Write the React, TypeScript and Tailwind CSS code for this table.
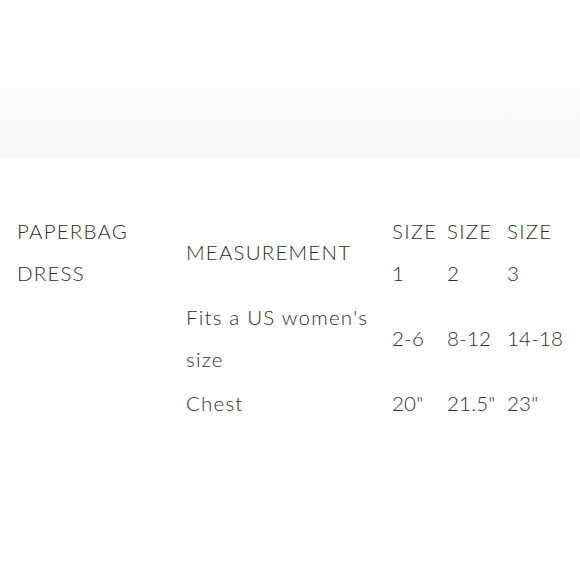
const rows = [
  { label: ['Fits a US women\'s', 'size'], values: ['2-6', '8-12', '14-18'] },
  { label: ['Chest'], values: ['20"', '21.5"', '23"'] },
];

export default function App() {
  return (
    <div className="flex h-[580px] w-[580px] flex-col overflow-hidden bg-white font-['Lato','Liberation_Sans',sans-serif] font-light text-[#2e2e2e]">
      <div className="h-[157px] shrink-0 bg-gradient-to-b from-white via-[#fdfdfd] to-[#f8f8f8]" />
      <div className="shrink-0 px-[17px] pt-[52px]">
        <table className="w-[546px] table-fixed border-collapse whitespace-nowrap text-[20.5px] leading-[42px] tracking-[1.2px]">
          <tbody>
            <tr>
              <td className="w-[169px] py-px align-middle">
                PAPERBAG
                <br />
                DRESS
              </td>
              <td className="w-[206px] py-px align-middle">MEASUREMENT</td>
              <td className="w-[55px] py-px align-middle">
                SIZE
                <br />1
              </td>
              <td className="w-[60px] py-px align-middle">
                SIZE
                <br />2
              </td>
              <td className="py-px align-middle">
                SIZE
                <br />3
              </td>
            </tr>
            {rows.map((row) => (
              <tr key={row.label[0]}>
                <td className="py-px" />
                <td className="py-px align-middle">
                  {row.label.map((line, i) => (
                    <div key={i}>{line}</div>
                  ))}
                </td>
                {row.values.map((v) => (
                  <td key={v} className="py-px align-middle tracking-[0.2px]">
                    {v}
                  </td>
                ))}
              </tr>
            ))}
          </tbody>
        </table>
      </div>
      <div className="ml-[97px] flex-1 bg-[#fdfdfd]" />
    </div>
  );
}
